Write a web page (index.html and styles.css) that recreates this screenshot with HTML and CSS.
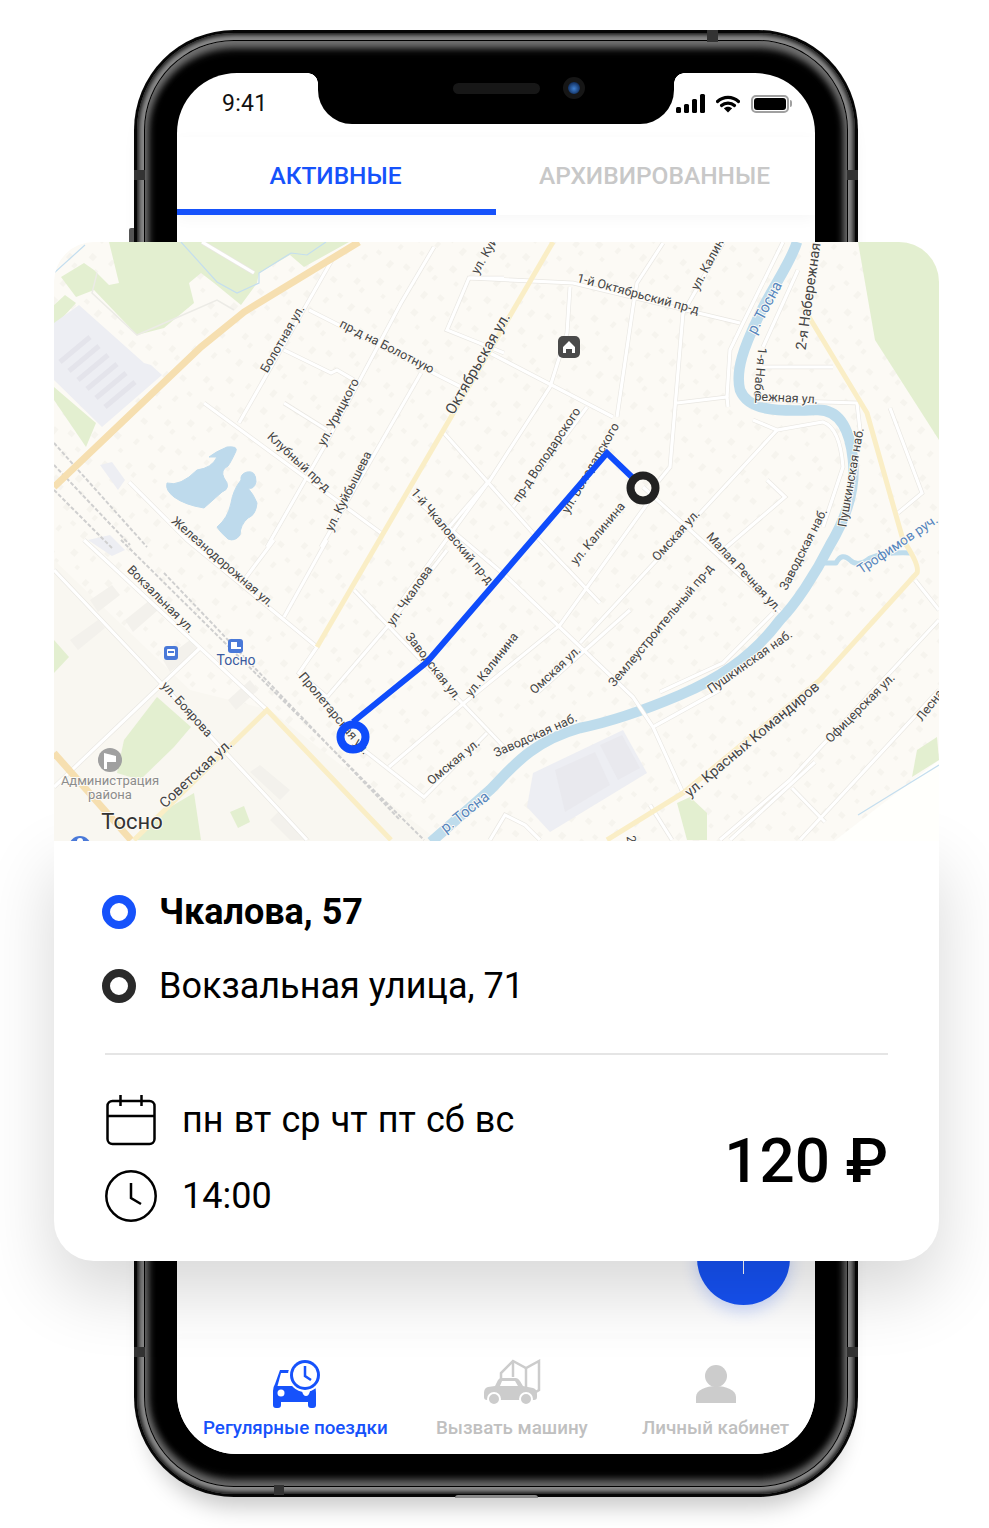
FILE: index.html
```html
<!DOCTYPE html>
<html lang="ru">
<head>
    <meta charset="UTF-8">
    <meta name="viewport" content="width=device-width, initial-scale=1.0">
    <title>Регулярные поездки</title>
    <link rel="stylesheet" href="styles.css">
</head>
<body>
<div class="stage">

    <!-- phone body -->
    <div class="phone">
        <span class="mark mark-top"></span>
        <span class="mark mark-bottom"></span>
        <span class="mark mark-left-a"></span>
        <span class="mark mark-left-b"></span>
        <span class="mark mark-right-a"></span>
        <span class="mark mark-right-b"></span>
        <span class="side-button"></span>
        <span class="bottom-bump"></span>
        <div class="rim">
            <div class="rim-line">
                <div class="bezel">
                    <div class="screen">
                        <div class="notch">
                            <span class="speaker"></span>
                            <span class="camera"></span>
                        </div>
                        <div class="status-bar">
                            <span class="clock">9:41</span>
                            <div class="status-icons">
                                <svg width="30" height="20" viewBox="0 0 30 20">
                                    <rect class="ico-black" x="0" y="13" width="5" height="6" rx="1.5"/>
                                    <rect class="ico-black" x="8" y="10" width="5" height="9" rx="1.5"/>
                                    <rect class="ico-black" x="16" y="5" width="5" height="14" rx="1.5"/>
                                    <rect class="ico-black" x="24" y="0" width="5" height="19" rx="1.5"/>
                                </svg>
                                <svg width="24" height="18" viewBox="0 0 24 18">
                                    <path class="ico-line" d="M1.5 6.5C7.5 1 16.500 1 22.500 6.500"/>
                                    <path class="ico-line" d="M5.500 10.500C9 7.200 15 7.200 18.500 10.500"/>
                                    <path class="ico-black" d="M12 17.500L7.800 13.300C10 11.200 14 11.200 16.200 13.300Z"/>
                                </svg>
                                <div class="battery"><span class="battery-fill"></span></div>
                            </div>
                        </div>

                        <div class="tabs">
                            <div class="tab tab-active">АКТИВНЫЕ</div>
                            <div class="tab">АРХИВИРОВАННЫЕ</div>
                        </div>

                        <div class="content">
                            <div class="fab"><span class="fab-line"></span></div>
                        </div>

                        <div class="nav">
                            <div class="nav-item nav-active">
                                <svg class="nav-icon nav-icon-shift" width="50" height="50" viewBox="0 0 50 50">
                                    <path class="ico-blue" d="M8 11H20V8H30V26H42Q44 29 44 34V46Q44 49 41 49H39Q36 49 36 46V43H9V46Q9 49 6 49H4Q1 49 1 46V32Q1 28 3 25Z"/>
                                    <path class="ico-white" d="M9 14H24L31 27H5.500Z"/>
                                    <circle class="ico-white" cx="9" cy="34" r="3.500"/>
                                    <path class="ico-white" d="M30 32H38Q37 37 34 37Q31 37 30 32Z"/>
                                    <circle class="ico-white" cx="33" cy="16" r="17"/>
                                    <circle class="ico-blue" cx="33" cy="16" r="15"/>
                                    <circle class="ico-white" cx="33" cy="16" r="12"/>
                                    <path class="hand-blue" d="M33 7V17L39 21"/>
                                </svg>
                                <span>Регулярные поездки</span>
                            </div>
                            <div class="nav-item">
                                <svg class="nav-icon" width="60" height="50" viewBox="0 0 60 50">
                                    <path class="ico-grey-line" d="M19 20V14L31 2L44 9L57 2V31L44 39"/>
                                    <path class="ico-grey-line" d="M31 2V18M44 9V39"/>
                                    <path class="ico-grey" d="M2 34Q2 29 6 28L13 27L16 21Q17 19 20 19H34Q36 19 38 22L41 27L51 29Q55 30 55 35V38Q55 41 52 41H5Q2 41 2 38Z"/>
                                    <path class="ico-white" d="M18 27L20 22H33L36 27Z"/>
                                    <circle class="ico-grey wheel" cx="12" cy="40" r="6"/>
                                    <circle class="ico-grey wheel" cx="44" cy="40" r="6"/>
                                </svg>
                                <span>Вызвать машину</span>
                            </div>
                            <div class="nav-item">
                                <svg class="nav-icon" width="44" height="50" viewBox="0 0 44 50">
                                    <circle class="ico-grey" cx="22" cy="17" r="11"/>
                                    <path class="ico-grey" d="M2 44V38C2 31 12 27 22 27S42 31 42 38V44Z"/>
                                </svg>
                                <span>Личный кабинет</span>
                            </div>
                        </div>
                    </div>
                </div>
            </div>
        </div>
    </div>

    <!-- route card, lies over the phone -->
    <div class="card">
        <svg class="map" width="885" height="599" viewBox="54 242 885 599">
            <defs>
                <pattern id="dots" width="58" height="46" patternUnits="userSpaceOnUse" patternTransform="rotate(-48)">
                    <rect class="dot" x="3" y="4" width="7" height="5"/>
                    <rect class="dot" x="24" y="1" width="5" height="4"/>
                    <rect class="dot" x="42" y="8" width="6" height="6"/>
                    <rect class="dot" x="13" y="18" width="5" height="6"/>
                    <rect class="dot" x="34" y="21" width="4" height="4"/>
                    <rect class="dot" x="50" y="27" width="6" height="4"/>
                    <rect class="dot" x="6" y="34" width="4" height="5"/>
                    <rect class="dot" x="27" y="37" width="6" height="5"/>
                </pattern>
                <g id="roads">
                    <path d="M332 260L239 423"/>
                    <path d="M309 310L461 387"/>
                    <path d="M434 247L401 303L324 447L267 547"/>
                    <path d="M421 373L321 547"/>
                    <path d="M204 403L381 533"/>
                    <path d="M284 350L331 373L337 370L354 380"/>
                    <path d="M284 403L327 430"/>
                    <path d="M129 482L167 520L187 540L317 647L299 673L327 697"/>
                    <path d="M354 590L504 747"/>
                    <path d="M504 278H469L447 330L504 353"/>
                    <path d="M444 433L533 533L600 603"/>
                    <path d="M487 483L444 533"/>
                    <path d="M469 278L573 283L740 323"/>
                    <path d="M663 243L637 283L633 307L617 417"/>
                    <path d="M723 243L683 313L670 467L657 483"/>
                    <path d="M570 287L567 333L550 387L490 480L395 610"/>
                    <path d="M490 353L613 417"/>
                    <path d="M587 407L513 507"/>
                    <path d="M677 403L727 397L728 407"/>
                    <path d="M727 397L730 350L743 323L783 242"/>
                    <path d="M798 270L763 347"/>
                    <path d="M762 367H833"/>
                    <path d="M757 400L857 403L860 430"/>
                    <path d="M753 420L777 430L823 422Q840 428 843 467L823 527"/>
                    <path d="M777 430L703 510L580 643"/>
                    <path d="M767 480L785 497L723 550"/>
                    <path d="M890 408L922 493L898 513"/>
                    <path d="M643 487L780 612"/>
                    <path d="M773 613L723 663L660 692"/>
                    <path d="M410 495L507 577L633 697L653 727L683 793"/>
                    <path d="M653 727L720 690"/>
                    <path d="M84 540L267 710"/>
                    <path d="M54 570L161 683L214 740L307 840"/>
                    <path d="M201 647L54 787"/>
                    <path d="M274 540L244 580"/>
                    <path d="M327 540L284 617"/>
                    <path d="M447 550L387 627L327 697"/>
                    <path d="M364 750L424 797L487 733"/>
                    <path d="M389 767L464 703L560 625L657 490"/>
                    <path d="M538 692L630 610"/>
                    <path d="M815 762L730 840"/>
                    <path d="M939 620L790 780L720 840"/>
                    <path d="M939 690L828 810L800 840"/>
                    <path d="M792 788L825 822"/>
                    <path d="M650 805L672 840"/>
                    <path d="M490 840L505 815L525 825L540 840"/>
                    <path d="M915 580L939 610"/>
                    <path d="M202 242L254 273"/>
                </g>
            </defs>

            <rect class="land" x="54" y="242" width="885" height="599"/>
            <rect fill="url(#dots)" x="54" y="242" width="885" height="599"/>
            <path class="city" d="M54 560L190 690L270 710L440 842H54Z"/>
            <path class="white-area" d="M833 842L939 760V842Z"/>

            <path class="green" d="M109 242L119 283L109 285L94 270L84 263L61 277L76 297L94 290L137 335L164 328L194 303L189 283L201 273L214 283L241 305L257 283L259 273L290 255L304 267L349 242Z"/>
            <path class="green" d="M54 327L76 303L65 295L54 305Z"/>
            <path class="green" d="M54 387L96 423L86 447L54 400Z"/>
            <path class="green" d="M858 242L875 340L939 440V262Q935 245 917 242Z"/>
            <path class="green" d="M117 773L124 740L157 697L191 727L174 747L140 780Z"/>
            <path class="green" d="M134 840L160 813L194 793L201 840Z"/>
            <path class="green" d="M54 640L69 657L54 673Z"/>
            <path class="green" d="M677 803L690 797L707 813L707 840H687Z"/>
            <path class="green" d="M912 777L917 750L937 737L939 760Z"/>
            <path class="green" d="M230 812L244 806L250 822L238 828Z"/>
            <path class="track" d="M97 273L92 293L137 335L217 300L234 310"/>

            <path class="grey-area" d="M54 323L79 305L144 363L151 365L162 375L102 427L54 380Z"/>
            <path class="stripes" d="M90 337L60 362M99 346L69 371M108 355L78 380M117 364L87 389M126 373L96 398M135 382L105 407"/>
            <path class="grey-area" d="M533 773L623 730L647 773L550 832L527 807Z"/>
            <path class="grey-dark" d="M600 745L622 735L640 768L618 780ZM555 770L595 752L610 785L565 812Z"/>
            <path class="grey-area" d="M100 465L112 462L125 480L118 490Z"/>
            <path class="grey-area" d="M88 540L110 535L125 550L112 556Z"/>
            <path class="block" d="M90 600L112 585L120 595L98 612ZM125 620L150 600L158 610L133 632ZM70 640L98 620L105 628L78 650ZM260 765L290 790L280 800L250 772ZM280 810L310 840H290L270 820ZM163 660L190 640L198 650L170 672ZM228 700L250 680L258 690L236 710Z"/>

            <path class="water" d="M167 483Q180 487 197 470Q212 468 217 457L209 457Q215 452 227 447Q238 446 236 451Q231 462 228 466Q220 470 224 478Q232 488 222 492L204 508Q185 505 174 497Q165 490 167 483Z"/>
            <path class="water" d="M217 527Q228 518 231 503Q233 490 241 480Q240 474 247 472Q256 470 256 482Q254 490 248 488Q254 495 257 503Q256 515 248 518Q240 525 240 535Q235 542 228 539Q220 532 217 527Z"/>
            <path class="stream" d="M181 242L217 282L237 293L259 283L259 273L291 253L307 255L326 242M54 273L85 245"/>
            <path class="stream" d="M858 815L939 765"/>
            <path class="river" d="M797 242C790 265 770 290 757 320C745 345 735 370 740 390C748 410 775 412 815 410C840 408 850 430 853 460C856 490 845 520 830 545C815 575 795 605 780 620C750 660 715 680 680 695C640 712 610 722 580 728C530 742 510 770 490 790L431 842"/>
            <path class="brook" d="M822 563H836Q842 552 850 560Q858 568 870 558Q885 552 910 553"/>

            <path class="rail" d="M54 443L147 547M54 465L130 545M54 490L112 548M121 540L424 840M164 573L400 820"/>

            <use href="#roads" class="road-edge"/>
            <use href="#roads" class="road-fill"/>

            <path class="road-main" d="M359 242L244 312L201 347L54 487"/>
            <path class="road-main" d="M54 753L131 840"/>
            <path class="road-yellow" d="M553 242L317 647"/>
            <path class="road-yellow" d="M134 840L267 710L391 840"/>
            <path class="road-yellow" d="M803 307L867 413L903 540Q920 565 917 573L820 680L683 793L607 840"/>

            <text class="lbl lbl-start" transform="translate(478 275) rotate(-60)">ул. Куй</text>
            <text class="lbl" transform="translate(286 341) rotate(-60)">Болотная ул.</text>
            <text class="lbl" transform="translate(385 350) rotate(27)">пр-д на Болотную</text>
            <text class="lbl" transform="translate(342 414) rotate(-62)">ул. Урицкого</text>
            <text class="lbl" transform="translate(296 465) rotate(43)">Клубный пр-д</text>
            <text class="lbl" transform="translate(352 493) rotate(-63)">ул. Куйбышева</text>
            <text class="lbl lbl-big" transform="translate(482 366) rotate(-60)">Октябрьская ул.</text>
            <text class="lbl" transform="translate(449 539) rotate(50)">1-й Чкаловский пр-д</text>
            <text class="lbl" transform="translate(220 565) rotate(41)">Железнодорожная ул.</text>
            <text class="lbl" transform="translate(158 602) rotate(45)">Вокзальная ул.</text>
            <text class="lbl" transform="translate(184 712) rotate(48)">ул. Боярова</text>
            <text class="lbl lbl-mid" transform="translate(199 777) rotate(-43)">Советская ул.</text>
            <text class="lbl" transform="translate(331 716) rotate(50)">Пролетарская ул.</text>
            <text class="lbl" transform="translate(430 669) rotate(52)">Заводская ул.</text>
            <text class="lbl" transform="translate(413 598) rotate(-55)">ул. Чкалова</text>
            <text class="lbl" transform="translate(495 667) rotate(-52)">ул. Калинина</text>
            <text class="lbl" transform="translate(456 765) rotate(-40)">Омская ул.</text>
            <text class="lbl" transform="translate(558 673) rotate(-43)">Омская ул.</text>
            <text class="lbl" transform="translate(679 538) rotate(-48)">Омская ул.</text>
            <text class="lbl" transform="translate(601 536) rotate(-50)">ул. Калинина</text>
            <text class="lbl" transform="translate(594 470) rotate(-60)">ул. Володарского</text>
            <text class="lbl" transform="translate(550 457) rotate(-56)">пр-д Володарского</text>
            <text class="lbl" transform="translate(637 298) rotate(15)">1-й Октябрьский пр-д</text>
            <text class="lbl lbl-start" transform="translate(698 291) rotate(-62)">ул. Калинина</text>
            <text class="lbl lbl-water" transform="translate(769 310) rotate(-62)">р. Тосна</text>
            <text class="lbl lbl-mid" transform="translate(813 297) rotate(-82)">2-я Набережная</text>
            <text class="lbl" transform="translate(756 372) rotate(95)">1-я Набе</text>
            <text class="lbl" transform="translate(786 402) rotate(3)">режная ул.</text>
            <text class="lbl" transform="translate(855 478) rotate(-80)">Пушкинская наб.</text>
            <text class="lbl" transform="translate(807 551) rotate(-63)">Заводская наб.</text>
            <text class="lbl" transform="translate(741 575) rotate(47)">Малая Речная ул.</text>
            <text class="lbl" transform="translate(664 628) rotate(-50)">Землеустроительный пр-д</text>
            <text class="lbl" transform="translate(752 665) rotate(-35)">Пушкинская наб.</text>
            <text class="lbl" transform="translate(537 739) rotate(-24)">Заводская наб.</text>
            <text class="lbl lbl-mid" transform="translate(755 743) rotate(-40)">ул. Красных Командиров</text>
            <text class="lbl" transform="translate(863 711) rotate(-45)">Офицерская ул.</text>
            <text class="lbl lbl-start" transform="translate(922 722) rotate(-52)">Лесная</text>
            <text class="lbl lbl-water" transform="translate(468 816) rotate(-38)">р. Тосна</text>
            <text class="lbl lbl-water-small" transform="translate(900 548) rotate(-34)">Трофимов руч.</text>
            <text class="lbl" transform="translate(627 840) rotate(80)">2</text>
            <text class="lbl lbl-station" x="236" y="665">Тосно</text>
            <text class="lbl lbl-poi" x="110" y="785">Администрация</text>
            <text class="lbl lbl-poi" x="110" y="799">района</text>
            <text class="lbl lbl-town" x="132" y="829">Тосно</text>

            <!-- poi pins -->
            <rect class="pin-dark" x="558" y="336" width="22" height="22" rx="5"/>
            <path class="ico-white" d="M569 341L575 347V353H572V349H566V353H563V347Z"/>
            <rect class="pin-blue" x="228" y="639" width="15" height="14" rx="3"/>
            <path class="ico-white" d="M231 642H237V647H241V649H231Z"/>
            <rect class="pin-blue" x="164" y="646" width="14" height="14" rx="3"/>
            <rect class="ico-white" x="167" y="649" width="8" height="7" rx="1"/>
            <path class="pin-blue" d="M168 651H174V653H168Z"/>
            <circle class="pin-grey" cx="110" cy="760" r="12"/>
            <path class="ico-white" d="M104 753L116 756V762H107V769H104Z"/>
            <circle class="pin-blue" cx="80" cy="847" r="11"/>
            <circle class="ico-white" cx="80" cy="841" r="3"/>

            <!-- route -->
            <path class="route" d="M635 480L607 453L427 662L353 722"/>
            <circle class="stop-start" cx="353" cy="737" r="12.500"/>
            <circle class="stop-end" cx="643" cy="488" r="12.500"/>
        </svg>

        <div class="details">
            <div class="route-row route-from">
                <span class="ring ring-blue"></span>
                <span>Чкалова, 57</span>
            </div>
            <div class="route-row">
                <span class="ring ring-dark"></span>
                <span>Вокзальная улица, 71</span>
            </div>
            <div class="divider"></div>
            <div class="schedule">
                <div class="schedule-list">
                    <div class="schedule-row">
                        <svg width="52" height="52" viewBox="0 0 52 52">
                            <rect class="thin" x="2.500" y="7" width="47" height="43" rx="5"/>
                            <path class="thin" d="M2.500 22H49.500M15.500 1V12M36.500 1V12"/>
                        </svg>
                        <span class="days">пн вт ср чт пт сб вс</span>
                    </div>
                    <div class="schedule-row">
                        <svg width="52" height="52" viewBox="0 0 52 52">
                            <circle class="thin" cx="26" cy="26" r="24.700"/>
                            <path class="thin" d="M26 13V28L36 34"/>
                        </svg>
                        <span>14:00</span>
                    </div>
                </div>
                <div class="price">120 ₽</div>
            </div>
        </div>
    </div>

</div>
</body>
</html>
```

FILE: styles.css
```css
body {
    margin: 0;
    background-color: #ffffff;
    font-family: Roboto, 'Noto Sans', sans-serif;
}

.stage {
    position: relative;
    width: 989px;
    height: 1528px;
    padding: 30px 0 0 134px;
    box-sizing: border-box;
    overflow: hidden;
}

/* phone body */
.phone {
    position: relative;
    width: 724px;
    height: 1467px;
    padding: 3px;
    box-sizing: border-box;
    background-color: #060606;
    border-radius: 100px;
    box-shadow: 0 24px 22px -14px rgba(0, 0, 0, 0.22);
}

.rim {
    height: 100%;
    padding: 7px;
    box-sizing: border-box;
    background-color: #8a8a8a;
    border-radius: 97px;
    box-shadow: inset 0 0 4px 2px #111111;
}

.rim-line {
    height: 100%;
    padding: 1px;
    box-sizing: border-box;
    background-color: #000000;
    border-radius: 90px;
}

.bezel {
    height: 100%;
    padding: 32px;
    box-sizing: border-box;
    background-color: #000000;
    border-radius: 89px;
    box-shadow: inset 0 0 7px 4px rgba(120, 120, 120, 0.8), inset 0 9px 8px -2px rgba(130, 130, 130, 0.75), inset 0 -9px 8px -2px rgba(90, 90, 90, 0.75);
}

.mark {
    position: absolute;
    background-color: #333333;
}

.mark-top { left: 573px; top: 0; width: 11px; height: 12px; }
.mark-bottom { left: 140px; bottom: 2px; width: 10px; height: 10px; }
.mark-left-a { left: 0; top: 140px; width: 11px; height: 10px; }
.mark-left-b { left: 0; top: 1317px; width: 11px; height: 10px; }
.mark-right-a { right: 0; top: 140px; width: 11px; height: 10px; }
.mark-right-b { right: 0; top: 1317px; width: 11px; height: 10px; }

.side-button {
    position: absolute;
    left: -5px;
    top: 198px;
    width: 5px;
    height: 30px;
    background-color: #555555;
    border-radius: 2px 0 0 2px;
}

.bottom-bump {
    position: absolute;
    left: 321px;
    bottom: -1px;
    width: 83px;
    height: 3px;
    background-color: #8a8a8a;
    border-radius: 3px 3px 0 0;
}

.screen {
    position: relative;
    display: flex;
    flex-direction: column;
    height: 100%;
    background-color: #ffffff;
    border-radius: 60px;
    overflow: hidden;
}

.notch {
    position: absolute;
    left: 141px;
    top: 0;
    width: 356px;
    height: 51px;
    background-color: #000000;
    border-radius: 0 0 34px 34px;
}

.notch::before,
.notch::after {
    content: "";
    position: absolute;
    top: 0;
    width: 10px;
    height: 10px;
}

.notch::before {
    left: -10px;
    background: radial-gradient(circle at 0 100%, transparent 9.500px, #000000 10px);
}

.notch::after {
    right: -10px;
    background: radial-gradient(circle at 100% 100%, transparent 9.500px, #000000 10px);
}

.speaker {
    position: absolute;
    left: 135px;
    top: 10px;
    width: 87px;
    height: 11px;
    background-color: #171717;
    border-radius: 6px;
}

.camera {
    position: absolute;
    left: 245px;
    top: 4px;
    width: 12px;
    height: 12px;
    border: 5px solid #161616;
    background: radial-gradient(circle at 50% 55%, #3f7fd0, #123060 70%);
    border-radius: 50%;
}

.status-bar {
    display: flex;
    justify-content: space-between;
    align-items: center;
    height: 64px;
    padding: 0 26px 4px 45px;
    box-sizing: border-box;
}

.clock {
    font-size: 23px;
    color: #111111;
    letter-spacing: 0.3px;
}

.status-icons {
    display: flex;
    align-items: center;
    gap: 10px;
    margin-top: 1px;
}

.battery {
    position: relative;
    width: 38px;
    height: 18px;
    padding: 1px;
    box-sizing: border-box;
    border: 2px solid #a0a0a0;
    border-radius: 5px;
    margin-left: 1px;
}

.battery::after {
    content: "";
    position: absolute;
    right: -5px;
    top: 3px;
    width: 2px;
    height: 7px;
    background-color: #a0a0a0;
    border-radius: 0 2px 2px 0;
}

.battery-fill {
    display: block;
    height: 100%;
    background-color: #000000;
    border-radius: 3px;
}

.tabs {
    display: flex;
    box-shadow: 0 4px 14px rgba(0, 0, 0, 0.035);
}

.tab {
    flex: 1;
    height: 78px;
    padding: 24px 2px 0 0;
    box-sizing: border-box;
    text-align: center;
    font-size: 24.500px;
    font-weight: 500;
    line-height: 30px;
    color: #c8c8c8;
    border-bottom: 6px solid transparent;
}

.tab-active {
    color: #1652fb;
    border-bottom-color: #1652fb;
}

.content {
    position: relative;
    flex: 1;
}

.fab {
    position: absolute;
    right: 25px;
    bottom: 34px;
    width: 93px;
    height: 93px;
    background-color: #1652f5;
    border-radius: 50%;
    box-shadow: 0 6px 16px rgba(22, 82, 245, 0.22);
}

.fab-line {
    position: absolute;
    left: 46px;
    top: 22px;
    width: 1px;
    height: 40px;
    background-color: #ffffff;
}

.nav {
    display: grid;
    grid-template-columns: 233px 206px auto;
    justify-items: start;
    height: 115px;
    padding: 20px 0 0 26px;
    box-sizing: border-box;
    background-color: #ffffff;
    box-shadow: 0 -3px 8px rgba(0, 0, 0, 0.015);
    position: relative;
}

.nav-item {
    display: flex;
    flex-direction: column;
    align-items: center;
    gap: 7px;
    font-size: 18.800px;
    font-weight: 500;
    line-height: 24px;
    color: #c0c0c0;
}

.nav-active {
    color: #1652fb;
}

.nav-icon-shift {
    margin-left: 4px;
}

.ico-black { fill: #000000; }
.ico-white { fill: #ffffff; }
.ico-blue { fill: #1652fb; }
.ico-grey { fill: #cccccc; }
.ico-line { fill: none; stroke: #000000; stroke-width: 3.200; stroke-linecap: round; }
.ico-grey-line { fill: none; stroke: #cccccc; stroke-width: 2.500; }
.hand-blue { fill: none; stroke: #1652fb; stroke-width: 2.500; }
.wheel { stroke: #ffffff; stroke-width: 2; }

/* route card */
.card {
    position: absolute;
    left: 54px;
    top: 242px;
    width: 885px;
}

.map {
    display: block;
    border-radius: 40px 40px 0 0;
}

.land { fill: #fcfaf5; }
.dot { fill: #f6f4ee; }
.city { fill: #f9f7f1; }
.block { fill: #f3f1ec; }
.white-area { fill: #fffffc; }
.green { fill: #e3efd0; }
.track { fill: none; stroke: #ecebe6; stroke-width: 1.500; }
.grey-area { fill: #edeef3; }
.grey-dark { fill: #e9e9ee; }
.stripes { fill: none; stroke: #e4e4eb; stroke-width: 5; }
.water { fill: #bedaec; stroke: #bedaec; stroke-linejoin: round; stroke-width: 1; }
.stream { fill: none; stroke: #c4deef; stroke-width: 1.200; }
.river { fill: none; stroke: #bedcec; stroke-width: 10.500; }
.brook { fill: none; stroke: #bedcec; stroke-width: 5; stroke-linejoin: round; }
.rail { fill: none; stroke: #cfcfcf; stroke-width: 2; stroke-dasharray: 4 2; }
.road-edge { fill: none; stroke: #e9e7e2; stroke-width: 4.500; }
.road-fill { fill: none; stroke: #ffffff; stroke-width: 3.200; }
.road-main { fill: none; stroke: #f6dfb0; stroke-width: 7; }
.road-yellow { fill: none; stroke: #faeec6; stroke-width: 5; }

.lbl {
    font-size: 12.500px;
    fill: #444444;
    text-anchor: middle;
    paint-order: stroke;
    stroke: #fcfaf5;
    stroke-width: 2px;
}

.lbl-start { text-anchor: start; }
.lbl-mid { font-size: 14.400px; }
.lbl-big { font-size: 15px; }
.lbl-water { font-size: 15px; fill: #5585bd; }
.lbl-water-small { font-size: 13.500px; fill: #5585bd; }
.lbl-station { font-size: 14px; fill: #3a5aa0; }
.lbl-poi { font-size: 13px; fill: #8c8c8c; }
.lbl-town { font-size: 22px; fill: #333333; }

.pin-dark { fill: #4a4a4a; }
.pin-blue { fill: #4a79d8; }
.pin-grey { fill: #a0a0a0; }

.route {
    fill: none;
    stroke: #0f4cfb;
    stroke-width: 6;
}

.stop-start { fill: none; stroke: #0f4cfb; stroke-width: 8; }
.stop-end { fill: none; stroke: #222222; stroke-width: 8; }

.details {
    padding: 50px 51px 39px;
    background-color: #ffffff;
    border-radius: 0 0 40px 40px;
    box-shadow: 0 30px 70px rgba(0, 0, 0, 0.16);
}

.route-row {
    display: flex;
    align-items: center;
    gap: 23px;
    margin-left: -3px;
    margin-bottom: 32px;
    font-size: 36px;
    line-height: 42px;
    color: #000000;
}

.route-from {
    font-weight: 700;
}

.ring {
    display: block;
    width: 34px;
    height: 34px;
    box-sizing: border-box;
    border-radius: 50%;
    border: 8px solid;
}

.ring-blue { border-color: #1652fb; }
.ring-dark { border-color: #2a2a2a; }

.divider {
    height: 2px;
    margin-top: 46px;
    background-color: #e5e5e5;
}

.schedule {
    display: flex;
    justify-content: space-between;
    align-items: center;
    margin-top: 39px;
}

.schedule-list {
    display: flex;
    flex-direction: column;
    gap: 24px;
}

.schedule-row {
    display: flex;
    align-items: center;
    gap: 25px;
    font-size: 36px;
    line-height: 52px;
}

.days {
    word-spacing: 1.200px;
}

.thin {
    fill: none;
    stroke: #000000;
    stroke-width: 2.500;
}

.price {
    margin-top: 4px;
    font-size: 62px;
    font-weight: 500;
    color: #000000;
}
```
